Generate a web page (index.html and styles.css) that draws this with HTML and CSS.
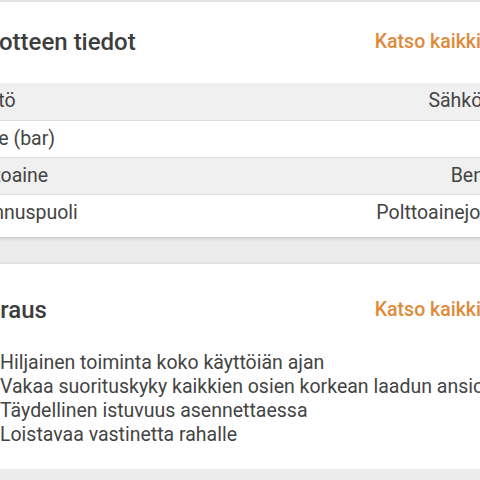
FILE: index.html
```html
<!DOCTYPE html>
<html lang="fi">
<head>
<meta charset="utf-8">
<title>Tuotteen tiedot</title>
<link rel="stylesheet" href="styles.css">
</head>
<body>
<div class="page">
  <section class="card card-specs">
    <header class="card-head">
      <h2 class="card-title">Tuotteen tiedot</h2>
      <a class="see-all" href="#">Katso kaikki
        <svg class="chev" viewBox="0 0 24 24" width="20" height="20"><path d="M9 6l6 6-6 6" fill="none" stroke="currentColor" stroke-width="2.2" stroke-linecap="round" stroke-linejoin="round"/></svg>
      </a>
    </header>
    <table class="specs">
      <tbody>
        <tr><td class="label">Käyttö</td><td class="value">Sähköinen</td></tr>
        <tr><td class="label">Paine (bar)</td><td class="value"></td></tr>
        <tr><td class="label">Polttoaine</td><td class="value">Bensiini</td></tr>
        <tr><td class="label">Asennuspuoli</td><td class="value">Polttoainejohtoa</td></tr>
      </tbody>
    </table>
  </section>

  <section class="card card-desc">
    <header class="card-head">
      <h2 class="card-title">Kuraus</h2>
      <a class="see-all" href="#">Katso kaikki
        <svg class="chev" viewBox="0 0 24 24" width="20" height="20"><path d="M9 6l6 6-6 6" fill="none" stroke="currentColor" stroke-width="2.2" stroke-linecap="round" stroke-linejoin="round"/></svg>
      </a>
    </header>
    <ul class="features">
      <li><span class="dot">•</span>Hiljainen toiminta koko käyttöiän ajan</li>
      <li><span class="dot">•</span>Vakaa suorituskyky kaikkien osien korkean laadun ansiosta</li>
      <li><span class="dot">•</span>Täydellinen istuvuus asennettaessa</li>
      <li><span class="dot">•</span>Loistavaa vastinetta rahalle</li>
    </ul>
  </section>
</div>
</body>
</html>
```

FILE: styles.css
```css
html, body {
  margin: 0;
  padding: 0;
}
body {
  background: #ececec;
  overflow: hidden;
  font-family: Roboto, "Liberation Sans", Arial, sans-serif;
  color: #444;
}
.page {
  margin-left: -52px;
  width: 583px;
  padding-top: 2px;
}
.card {
  background: #fff;
  box-shadow: 0 1px 4px rgba(0, 0, 0, 0.22);
}
.card-specs {
  padding-bottom: 6px;
  margin-bottom: 27px;
}
.card-desc {
  padding-bottom: 22px;
}
.card-head {
  display: flex;
  justify-content: space-between;
  align-items: center;
  padding: 0 24px;
}
.card-specs .card-head {
  padding-top: 26px;
  padding-bottom: 27px;
}
.card-desc .card-head {
  padding-top: 32px;
  padding-bottom: 27px;
}
.card-title {
  margin: 0;
  font-size: 24px;
  line-height: 28px;
  font-weight: 500;
  color: #3d3d3d;
}
.see-all {
  display: flex;
  align-items: center;
  gap: 6px;
  font-size: 19.5px;
  line-height: 24px;
  font-weight: 500;
  color: #e08a3b;
  text-decoration: none;
}
.chev {
  display: block;
}
.specs {
  width: 100%;
  border-collapse: collapse;
  font-size: 19.5px;
}
.specs tr {
  height: 37px;
  border-bottom: 1px solid #dedede;
}
.specs tr:last-child {
  border-bottom: 0;
}
.specs tr:nth-child(odd) {
  background: #f0f0f0;
}
.specs td {
  padding: 0 12px;
  line-height: 22px;
}
.specs .value {
  text-align: right;
}
.features {
  list-style: none;
  margin: 0;
  padding: 0 24px;
  font-size: 19.5px;
  line-height: 24px;
}
.features li {
  display: flex;
  white-space: nowrap;
}
.dot {
  width: 28px;
  flex: none;
}
```
